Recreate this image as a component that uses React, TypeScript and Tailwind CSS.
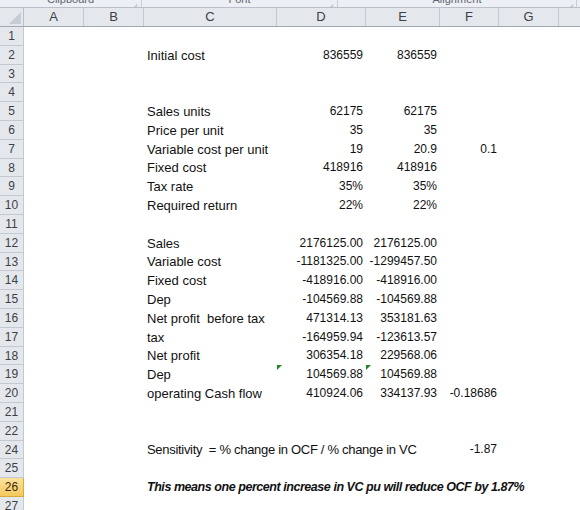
import React from 'react';

type Row = {
  n: number;
  c?: string;
  d?: string;
  e?: string;
  f?: string;
  mark?: boolean;
  kind?: 'note' | 'wide';
};

const rows: Row[] = [
  { n: 1 },
  { n: 2, c: 'Initial cost', d: '836559', e: '836559' },
  { n: 3 },
  { n: 4 },
  { n: 5, c: 'Sales units', d: '62175', e: '62175' },
  { n: 6, c: 'Price per unit', d: '35', e: '35' },
  { n: 7, c: 'Variable cost per unit', d: '19', e: '20.9', f: '0.1' },
  { n: 8, c: 'Fixed cost', d: '418916', e: '418916' },
  { n: 9, c: 'Tax rate', d: '35%', e: '35%' },
  { n: 10, c: 'Required return', d: '22%', e: '22%' },
  { n: 11 },
  { n: 12, c: 'Sales', d: '2176125.00', e: '2176125.00' },
  { n: 13, c: 'Variable cost', d: '-1181325.00', e: '-1299457.50' },
  { n: 14, c: 'Fixed cost', d: '-418916.00', e: '-418916.00' },
  { n: 15, c: 'Dep', d: '-104569.88', e: '-104569.88' },
  { n: 16, c: 'Net profit  before tax', d: '471314.13', e: '353181.63' },
  { n: 17, c: 'tax', d: '-164959.94', e: '-123613.57' },
  { n: 18, c: 'Net profit', d: '306354.18', e: '229568.06' },
  { n: 19, c: 'Dep', d: '104569.88', e: '104569.88', mark: true },
  { n: 20, c: 'operating Cash flow', d: '410924.06', e: '334137.93', f: '-0.18686' },
  { n: 21 },
  { n: 22 },
  { n: 24, c: 'Sensitivity  = % change in OCF / % change in VC', f: '-1.87', kind: 'wide' },
  { n: 25 },
  { n: 26, c: 'This means one percent increase in VC pu will reduce OCF by 1.87%', kind: 'note' },
  { n: 27 },
];

const cols = ['A', 'B', 'C', 'D', 'E', 'F', 'G'];
const widths = ['w-[60px]', 'w-[60px]', 'w-[133px]', 'w-[89px]', 'w-[74px]', 'w-[59px]', 'w-[60px]'];

// green error marker in the corner of a cell
const Mark = () => (
  <svg className="absolute left-0 top-0" width="5" height="5" viewBox="0 0 5 5">
    <polygon points="0,0 5,0 0,5" fill="#1e8a1e" />
  </svg>
);

const Num = ({ v, mark, pr }: { v?: string; mark?: boolean; pr: string }) => (
  <div className={`relative flex h-full items-end justify-end ${pr} pb-[2px]`}>
    {mark && <Mark />}
    {v && <span className="text-[12px] leading-[15px]">{v}</span>}
  </div>
);

export default function App() {
  return (
    <div
      className="w-[580px] h-[510px] overflow-hidden bg-white text-[#111]"
      style={{ fontFamily: '"Liberation Sans", Arial, sans-serif' }}
    >
      {/* ribbon group labels, cut off at the top */}
      <div className="flex h-[8px] overflow-hidden border-b border-[#b9c0c9] bg-[#eceff3] text-[11px] leading-none text-[#5e6670]">
        <div className="relative flex w-[142px] justify-center border-r border-[#c9ced5]">
          <span className="mt-[-6px]">Clipboard</span>
          <span className="absolute right-[4px] top-[0px] text-[7px] leading-none text-[#8a9099]">⌟</span>
        </div>
        <div className="relative flex w-[196px] justify-center border-r border-[#c9ced5]">
          <span className="mt-[-6px]">Font</span>
          <span className="absolute right-[4px] top-[0px] text-[7px] leading-none text-[#8a9099]">⌟</span>
        </div>
        <div className="relative flex w-[239px] justify-center border-r border-[#c9ced5]">
          <span className="mt-[-6px]">Alignment</span>
          <span className="absolute right-[3px] top-[0px] text-[7px] leading-none text-[#8a9099]">⌟</span>
        </div>
      </div>

      {/* column headers */}
      <div className="flex h-[19px] border-b border-[#9fa8b4] bg-[#e4e8ed] text-[13px] text-[#3c3f44]">
        <div className="relative w-[24px] shrink-0 border-r border-[#b7bec8]">
          <svg className="absolute bottom-[2px] right-[2px]" width="12" height="12" viewBox="0 0 12 12">
            <polygon points="12,0 12,12 0,12" fill="#c6ccd4" />
          </svg>
        </div>
        {cols.map((c, i) => (
          <div
            key={c}
            className={`${widths[i]} shrink-0 flex items-center justify-center border-r border-[#c3c9d1]`}
          >
            {c}
          </div>
        ))}
        <div className="flex-1" />
      </div>

      {rows.map((r, i) => {
        const h = i % 5 === 2 ? 'h-[18px]' : 'h-[19px]';
        return (
          <div key={r.n} className={`flex ${h}`}>
            <div
              className={`w-[24px] shrink-0 flex items-center justify-center border-b border-r text-[12px] ${
                r.n === 26
                  ? 'bg-gradient-to-b from-[#fbe29b] to-[#f5c85f] border-[#d9a93c] text-[#3a2a05]'
                  : 'bg-[#e4e8ed] border-[#c3c9d1] text-[#3c3f44]'
              }`}
            >
              {r.n}
            </div>
            <div className={`${widths[0]} shrink-0`} />
            <div className={`${widths[1]} shrink-0`} />
            <div className={`${widths[2]} shrink-0 flex items-end pl-[3px] pb-[2px]`}>
              {r.c && (
                <span
                  className={`whitespace-pre leading-[15px] ${
                    r.kind === 'note'
                      ? 'text-[12.5px] font-bold italic tracking-[-0.45px]'
                      : r.kind === 'wide'
                        ? 'text-[13px] tracking-[-0.3px]'
                        : 'text-[13px]'
                  }`}
                >
                  {r.c}
                </span>
              )}
            </div>
            <div className={`${widths[3]} shrink-0`}>
              <Num v={r.d} mark={r.mark} pr="pr-[3px]" />
            </div>
            <div className={`${widths[4]} shrink-0`}>
              <Num v={r.e} mark={r.mark} pr="pr-[3px]" />
            </div>
            <div className={`${widths[5]} shrink-0`}>
              <Num v={r.f} pr="pr-[2px]" />
            </div>
            <div className={`${widths[6]} shrink-0`} />
            <div className="flex-1" />
          </div>
        );
      })}
    </div>
  );
}
